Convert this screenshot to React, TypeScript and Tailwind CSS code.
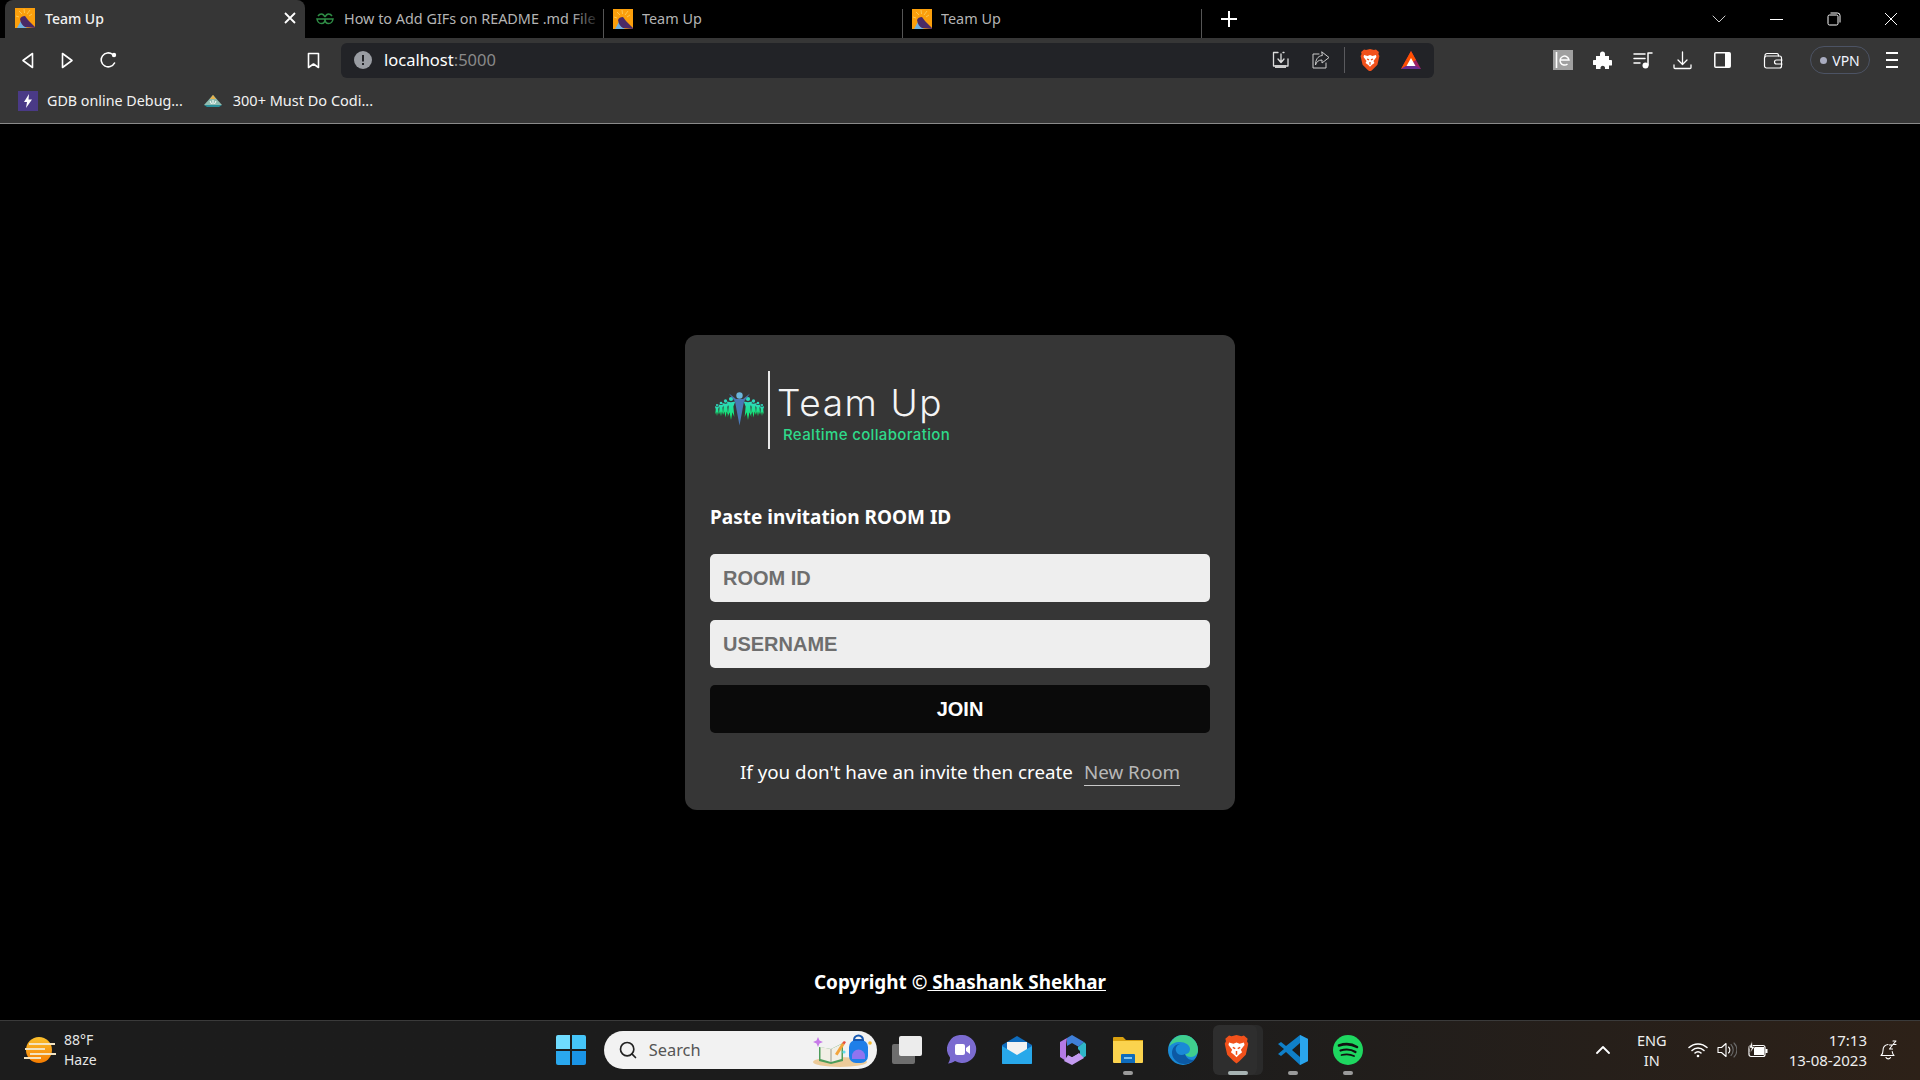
import { Search } from 'lucide-react';

const sans = 'font-["Noto_Sans",sans-serif]';

function Favicon() {
  return (
    <svg width="20" height="20" viewBox="0 0 20 20" className="shrink-0">
      <rect width="20" height="20" fill="#fb9f0c" />
      <path d="M9 1l.5 4M4 3l3 3M15 2l-3 4M1 8l3 1M17 6l-3 2" stroke="#fdc850" strokeWidth="1" />
      <path d="M2 20l5-9 1 6 4 3z" fill="#6fb0e0" />
      <path d="M5 11q1-3 5-3l3 4 7 7v1l-10-1q-4-2-5-8z" fill="#4a2a66" />
    </svg>
  );
}

function Tab({ active, title, icon, fade }: { active?: boolean; title: string; icon?: React.ReactNode; fade?: boolean }) {
  return (
    <div
      className={
        active
          ? 'flex h-[38px] w-[300px] items-center rounded-t-[8px] bg-[#363636] pb-[2px] pl-[10px] pr-[9px]'
          : 'relative flex h-[38px] w-[298px] items-center pb-[1px] pl-[9px]'
      }
    >
      {icon ?? <Favicon />}
      <span
        className={
          active
            ? 'ml-[10px] flex-1 text-[14px] font-medium text-[#f2f2f2]'
            : 'ml-[9px] w-[252px] overflow-hidden whitespace-nowrap text-[14.4px] text-[#b4b4b4]'
        }
      >
        {title}
      </span>
      {fade && <div className="absolute right-[12px] top-0 h-[38px] w-[30px] bg-gradient-to-r from-transparent to-black" />}
      {active && (
        <svg width="12" height="12" viewBox="0 0 12 12" stroke="#fff" strokeWidth="1.8">
          <path d="M1 1l10 10M11 1L1 11" />
        </svg>
      )}
    </div>
  );
}

function Divider() {
  return <div className="relative mt-[9px] h-[29px] w-px bg-[#555]" />;
}

function Stroke({ w = 20, h = 20, children, sw = 1.6, color = '#fff' }: { w?: number; h?: number; children: React.ReactNode; sw?: number; color?: string }) {
  return (
    <svg width={w} height={h} viewBox={`0 0 ${w} ${h}`} fill="none" stroke={color} strokeWidth={sw} strokeLinejoin="round" strokeLinecap="round" className="shrink-0">
      {children}
    </svg>
  );
}

function BraveIcon({ size = 20 }: { size?: number }) {
  return (
    <svg width={size} height={size * 1.14} viewBox="0 0 20 23" className="shrink-0">
      <path d="M10 0l4 1 2-.5L19 3l-.5 2 1 2-2 9-5 5-2.5 2-2.5-2-5-5-2-9 1-2L1 3l3-2.5L6 1z" fill="#f1511b" />
      <path d="M4 6l3.5 1L10 6l2.5 1L16 6l.5 2-3 4 1 2-2.5 2-2 2-2-2-2.5-2 1-2-3-4z" fill="#fff" />
      <path d="M7 10l2 1M13 10l-2 1M10 13v3" stroke="#f1511b" strokeWidth="1.2" />
    </svg>
  );
}

function BrowserChrome() {
  return (
    <div className="shrink-0">
      <div className="flex h-[38px] items-start bg-black pl-[5px]">
        <Tab active title="Team Up" />
        <div className="ml-[11px] w-[287px]">
          <Tab
            fade
            title="How to Add GIFs on README .md File"
            icon={
              <svg width="18" height="12" viewBox="0 0 18 12" fill="none" stroke="#2f8d46" strokeWidth="1.5" className="ml-[-9px] mr-[1px] shrink-0">
                <path d="M9 6h8c-.5 3-2.5 4.500-4.500 4.500S9 9 9 6zM9 6H1c.5 3 2.500 4.500 4.500 4.500S9 9 9 6zM2 3c1-1.500 2-2 3.500-2S8 2 9 4M16 3c-1-1.500-2-2-3.500-2S10 2 9 4" />
              </svg>
            }
          />
        </div>
        <Divider />
        <Tab title="Team Up" />
        <Divider />
        <Tab title="Team Up" />
        <Divider />
        <div className="ml-[19px] mt-[11px]">
          <Stroke w={16} h={16} sw={2}>
            <path d="M8 0v16M0 8h16" />
          </Stroke>
        </div>
        <div className="ml-auto flex h-[38px] items-center">
          <Stroke w={14} h={8} sw={1} color="#ccc">
            <path d="M1 1l6 6 6-6" />
          </Stroke>
          <div className="ml-[44px] h-px w-[13px] bg-white" />
          <svg width="14" height="14" viewBox="0 0 14 14" fill="none" stroke="#fff" strokeWidth="1" className="ml-[44px]">
            <rect x="1" y="3" width="10" height="10" rx="1.5" />
            <path d="M3.5 1h7A2.500 2.500 0 0 1 13 3.500v7" />
          </svg>
          <svg width="14" height="14" viewBox="0 0 14 14" stroke="#fff" strokeWidth="1" className="ml-[43px] mr-[22px]">
            <path d="M1 1l12 12M13 1L1 13" />
          </svg>
        </div>
      </div>

      <div className="h-[86px] border-b border-[#8a8a8a] bg-[#363636]">
        <div className="flex h-[46px] items-center pb-[2px]">
          <div className="ml-[21px]">
            <Stroke w={13} h={17}><path d="M11.5 1.500v14L2 8.500z" /></Stroke>
          </div>
          <div className="ml-[27px]">
            <Stroke w={13} h={17}><path d="M1.5 1.500v14l9.500-7z" /></Stroke>
          </div>
          <div className="ml-[26px]">
            <Stroke w={17} h={18}>
              <path d="M14.5 12a7 7 0 1 1-1.800-8.500" />
              <circle cx="14" cy="4" r="2.2" fill="#fff" stroke="none" />
            </Stroke>
          </div>
          <div className="ml-[190px]">
            <Stroke w={13} h={17}><path d="M1.5 1.500h10v14L6.500 12l-5 3.500z" /></Stroke>
          </div>
          <div className="ml-[21px] flex h-[35px] w-[1093px] items-center rounded-[6px] bg-[#222327]">
            <svg width="18" height="18" viewBox="0 0 18 18" className="ml-[13px]">
              <circle cx="9" cy="9" r="9" fill="#9a9da3" />
              <rect x="8" y="4" width="2" height="6.5" fill="#222327" />
              <rect x="8" y="12" width="2" height="2" fill="#222327" />
            </svg>
            <span className={`ml-[12px] text-[16.5px] text-white ${sans}`}>
              localhost<span className="text-[#8a8a8a]">:5000</span>
            </span>
            <div className="ml-auto">
              <Stroke w={20} h={20} sw={1.3} color="#ddd">
                <path d="M5 16H2.500V2.500H7M12 2.500h1M17 9v7h-2M10 4v8M7 9l3 3.500 3-3.500" />
                <rect x="4" y="15" width="11" height="3" fill="#ccc" stroke="none" />
              </Stroke>
            </div>
            <div className="ml-[20px]">
              <Stroke w={20} h={20} sw={1} color="#ccc">
                <path d="M8 4H2v14h13v-5M11 2l7 5.500-7 5.500V10C7 10 5.500 12 4.500 15c0-5 2-9 6.500-9.500z" />
              </Stroke>
            </div>
            <div className="ml-[13px] h-[26px] w-px bg-[#5a5a5e]" />
            <div className="ml-[15px]"><BraveIcon /></div>
            <svg width="20" height="18" viewBox="0 0 20 18" className="ml-[21px] mr-[13px]">
              <path d="M10 0l10 18H0z" fill="#9e1f63" />
              <path d="M10 0l5 9-5 3-5-3z" fill="#ff5000" />
              <path d="M0 18l5-9 5 3z" fill="#ff5000" />
              <path d="M10 7l4.500 8h-9z" fill="#fff" />
              <path d="M20 18H0l5-3h10z" fill="#662d91" />
            </svg>
          </div>

          <svg width="20" height="20" viewBox="0 0 20 20" className="ml-[119px]" fill="none">
            <rect width="20" height="20" fill="#a0a0a0" />
            <path d="M3.5 2v16" stroke="#fff" strokeWidth="1.6" />
            <path d="M7 10h9a4.500 4.500 0 1 0-1.500 4" stroke="#fff" strokeWidth="1.5" />
          </svg>
          <svg width="19" height="18" viewBox="0 0 19 18" className="ml-[20px]" fill="#fff">
            <path d="M3 5h4V3a2.500 2.500 0 0 1 5 0v2h4v4h2a2.800 2.800 0 0 1 0 5.500h-2V18h-4v-1.500a2.300 2.300 0 0 0-4.500 0V18H3v-4H1.500a2.500 2.500 0 0 1 0-5H3z" />
          </svg>
          <div className="ml-[21px]">
            <Stroke w={20} h={17} sw={1.5}>
              <path d="M1 2h11M1 6.500h11M1 11h6M19 1h-4v12" />
              <circle cx="12.5" cy="13.5" r="3" fill="#fff" stroke="none" />
            </Stroke>
          </div>
          <div className="ml-[20px]">
            <Stroke w={19} h={19} sw={1.3}>
              <path d="M9.5 1v12M5 9l4.500 4.500L14 9M1 14v2.500a1 1 0 0 0 1 1h15a1 1 0 0 0 1-1V14" />
            </Stroke>
          </div>
          <svg width="17" height="16" viewBox="0 0 17 16" className="ml-[22px]" fill="none">
            <rect x=".8" y=".8" width="15.4" height="14.4" rx="1" stroke="#fff" strokeWidth="1.5" />
            <rect x="11" y="1" width="5" height="14" fill="#fff" />
          </svg>
          <div className="ml-[32px]">
            <Stroke w={20} h={17} sw={1.2}>
              <path d="M2 5V3.500A2 2 0 0 1 4 1.500h10c1 0 1.500 1 1.500 2.500" />
              <rect x="1.5" y="4" width="17" height="12" rx="2" />
              <path d="M19 8h-5.500a2 2 0 0 0 0 4H19" />
            </Stroke>
          </div>
          <div className="ml-[27px] flex h-[28px] w-[60px] items-center justify-center gap-[5px] rounded-full border border-[#4c5364]">
            <span className="h-[7px] w-[7px] rounded-full bg-[#a9acc0]" />
            <span className={`text-[14px] text-[#f0f4ff] ${sans}`}>VPN</span>
          </div>
          <div className="ml-[16px] flex w-[12px] flex-col gap-[5px]">
            <div className="h-[2px] bg-white" />
            <div className="h-[2px] bg-white" />
            <div className="h-[2px] bg-white" />
          </div>
        </div>

        <div className={`flex h-[38px] items-center pb-[4px] text-[14.3px] text-[#f2f2f2] ${sans}`}>
          <div className="ml-[18px] flex h-[20px] w-[20px] items-center justify-center bg-[#4a3a86]">
            <svg width="8" height="14" viewBox="0 0 8 14" fill="#fff">
              <path d="M5 0L0 8h3l-1 6 6-8.500H4.500z" />
            </svg>
          </div>
          <span className="ml-[9px]">GDB online Debug...</span>
          <svg width="20" height="12" viewBox="0 0 20 12" className="ml-[20px]">
            <path d="M10 0l9 10H1z" fill="#8fbcb0" />
            <path d="M10 0l3 4H7z" fill="#e8b24a" />
            <path d="M1 10h18l-3 2H4z" fill="#2a8f9a" />
            <path d="M7 6l1.500 3M13 6l-1.500 3M10 5v4" stroke="#fff" strokeWidth="1" />
          </svg>
          <span className="ml-[10px] text-[14.5px]">300+ Must Do Codi...</span>
        </div>
      </div>
    </div>
  );
}

function TeamLogo() {
  const figures = [
    { x: 2, y: 13, s: 0.5 },
    { x: 6, y: 11, s: 0.6 },
    { x: 10.5, y: 9, s: 0.75 },
    { x: 16, y: 7, s: 0.95 },
    { x: 33, y: 7, s: 0.95 },
    { x: 38.5, y: 9, s: 0.75 },
    { x: 43, y: 11, s: 0.6 },
    { x: 47, y: 13, s: 0.5 },
  ];
  return (
    <svg width="49" height="34" viewBox="0 0 49 34" className="ml-[5px] mb-[2px] shrink-0">
      <defs>
        <linearGradient id="fig" x1="0" y1="0" x2="0" y2="1">
          <stop offset="0" stopColor="#2fd9c0" />
          <stop offset="1" stopColor="#08ee5c" />
        </linearGradient>
      </defs>
      {figures.map((f, i) => (
        <g key={i} transform={`translate(${f.x} ${f.y}) scale(${f.s})`}>
          <circle cx="0" cy="0" r="2.2" fill="#2fd9c0" />
          <path d="M-4.500 2.500L0 3.500 4.500 2.500 2.500 8 3.500 19 1.500 14 0 22-1.500 14-3.500 19-2.500 8z" fill="url(#fig)" />
        </g>
      ))}
      <circle cx="24.5" cy="3.5" r="3.2" fill="#6cb6dc" />
      <path d="M14 1.500l7 5.500h7l7-5.500-6 8-3 16-1.500 8-1.500-8-3-16z" fill="#4a78b5" />
    </svg>
  );
}

function JoinCard() {
  return (
    <div className="flex h-[475px] w-[550px] flex-col rounded-[12px] bg-[#363636] px-[25px]">
      <div className="mt-[36px] flex h-[78px] items-center">
        <TeamLogo />
        <div className="ml-[4px] h-[78px] w-[2px] bg-[#e8e8e8]" />
        <div className="ml-[7px] flex h-[78px] flex-col">
          <span className="mt-[9px] whitespace-nowrap font-['Inter',sans-serif] text-[37px] font-light leading-[46px] tracking-[1.6px] text-[#f4f4f4]">
            Team Up
          </span>
          <span className="ml-[6px] whitespace-nowrap font-['Inter',sans-serif] text-[15px] font-medium leading-[18px] tracking-[0.35px] text-[#2fd98a]">
            Realtime collaboration
          </span>
        </div>
      </div>
      <h4 className={`mt-[55px] whitespace-nowrap text-[19px] font-bold leading-[27px] text-white ${sans}`}>Paste invitation ROOM ID</h4>
      <div className="mt-[23px] flex flex-col">
        <input
          placeholder="ROOM ID"
          className="h-[48px] w-full rounded-[5px] bg-[#eeeeee] px-[13px] font-['Liberation_Sans',sans-serif] text-[20px] font-bold text-black outline-none placeholder:text-[#6e6e6e]"
        />
        <input
          placeholder="USERNAME"
          className="mt-[18px] h-[48px] w-full rounded-[5px] bg-[#eeeeee] px-[13px] font-['Liberation_Sans',sans-serif] text-[20px] font-bold text-black outline-none placeholder:text-[#6e6e6e]"
        />
        <button className="mt-[17px] h-[48px] w-full rounded-[5px] bg-[#0a0a0a] font-['Liberation_Sans',sans-serif] text-[20px] font-bold text-white">
          JOIN
        </button>
      </div>
      <p className={`mt-[26px] text-center text-[18.8px] leading-[27px] text-white ${sans}`}>
        If you don't have an invite then create
        <a className="ml-[11px] border-b border-[#c8c8c8] text-[#b8b8b8]">New Room</a>
      </p>
    </div>
  );
}

function TaskbarIcons() {
  return (
    <div className="flex items-center">
      {/* task view */}
      <div className="relative ml-[15px] h-[28px] w-[30px]">
        <div className="absolute bottom-0 left-0 h-[20px] w-[23px] rounded-[2px] bg-[#6e6e6e]" />
        <div className="absolute right-0 top-0 h-[20px] w-[23px] rounded-[2px] bg-[#ececec]" />
      </div>
      {/* chat */}
      <svg width="30" height="29" viewBox="0 0 30 29" className="ml-[25px]">
        <path d="M15 0a14 14 0 1 1-7 26c-2 1.500-5 2.500-7 2.500 1.500-2 2-4 2-6A14 14 0 0 1 15 0z" fill="#7b6bd0" />
        <rect x="8" y="9" width="10" height="11" rx="2" fill="#fff" />
        <path d="M19 13l4-3v9l-4-3z" fill="#fff" />
      </svg>
      {/* mail */}
      <svg width="30" height="28" viewBox="0 0 30 28" className="ml-[25px]">
        <path d="M0 9L15 0l15 9v18a1 1 0 0 1-1 1H1a1 1 0 0 1-1-1z" fill="#0f6cbd" />
        <path d="M5 6h20v9l-10 6-10-6z" fill="#f2f2f2" />
        <path d="M0 10l15 9 15-9v17a1 1 0 0 1-1 1H1a1 1 0 0 1-1-1z" fill="#28a8ea" />
      </svg>
      {/* microsoft 365 */}
      <svg width="28" height="30" viewBox="0 0 28 30" className="ml-[26px]">
        <path d="M14 0l12 7-6 5-6-3-5 3V3z" fill="#3f7fd8" />
        <path d="M9 3L2 7v15l6 4V10z" fill="#b479e6" />
        <path d="M26 7l2 2v12l-6 4v-9l-3-3z" fill="#2fb6c9" />
        <path d="M6 26l8 4 12-7-5-5-7 4-4-2z" fill="#c39af0" />
        <path d="M9 11l5-3 6 3.500v7L14 22l-5-3z" fill="#1c1c1c" />
      </svg>
      {/* file explorer */}
      <svg width="30" height="27" viewBox="0 0 30 27" className="relative ml-[27px]">
        <path d="M0 2a1 1 0 0 1 1-1h9l3 3h17v5H0z" fill="#d9a00f" />
        <path d="M0 5h30v21a1 1 0 0 1-1 1H1a1 1 0 0 1-1-1z" fill="#fbd34e" />
        <path d="M8 19a1 1 0 0 1 1-1h12a1 1 0 0 1 1 1v8H8z" fill="#0f6cbd" />
        <rect x="11" y="21" width="8" height="2" fill="#7fc4f0" />
      </svg>
      {/* edge */}
      <svg width="30" height="30" viewBox="0 0 30 30" className="ml-[25px]">
        <circle cx="15" cy="15" r="15" fill="#1a8ad6" />
        <path d="M1 12C3 4 9 0 15 0c8 0 15 6 15 15 0 4-3 7-7 7-3 0-5-1-6-3 3 0 5-2 5-5 0-4-5-7-10-7C7 7 3 9 1 12z" fill="#3fcf8e" />
        <path d="M17 19c-3 2-8 1-9-3-1-3 1-6 4-7-5 0-8 4-8 9 0 6 6 11 12 11 4 0 9-2 11-5-3 2-8 1-10-5z" fill="#0c59a4" />
      </svg>
      {/* brave */}
      <div className="relative ml-[15px] h-[50px] w-[50px]">
        <div className="absolute right-0 top-0 h-[50px] w-[20px] rounded-[6px] bg-[#2a2a2a]" />
        <div className="absolute left-0 top-0 flex h-[50px] w-[44px] items-center justify-center rounded-[6px] bg-[#2e2e2e] pl-[4px]">
          <BraveIcon size={25} />
        </div>
      </div>
      {/* vs code */}
      <svg width="30" height="30" viewBox="0 0 30 30" className="ml-[15px]">
        <path d="M22 0l8 4v22l-8 4-14-13-5 4-3-2 6-5-6-5 3-2 5 4z" fill="#0f7fc8" />
        <path d="M22 0l8 4v22l-8 4z" fill="#2aa5ec" />
        <path d="M22 8l-8 7 8 7z" fill="#1c1c1c" />
      </svg>
      {/* spotify */}
      <svg width="30" height="30" viewBox="0 0 30 30" className="ml-[25px]" fill="none">
        <circle cx="15" cy="15" r="15" fill="#1ed760" />
        <path d="M6 10.500c6-2 13-1.500 18 1.500" stroke="#111" strokeWidth="2.6" strokeLinecap="round" />
        <path d="M7.500 15.500c5-1.500 11-1 15 1.500" stroke="#111" strokeWidth="2.2" strokeLinecap="round" />
        <path d="M8.500 20c4-1 9-.8 12.500 1" stroke="#111" strokeWidth="1.8" strokeLinecap="round" />
      </svg>
    </div>
  );
}

function Taskbar() {
  return (
    <div className={`relative flex h-[60px] shrink-0 items-center border-t border-[#3a3a3a] bg-gradient-to-r from-[#1c1c1c] from-60% to-[#2d2118] pb-[2px] text-white ${sans}`}>
      {/* weather */}
      <svg width="32" height="26" viewBox="0 0 32 26" className="ml-[24px]">
        <defs>
          <linearGradient id="sun" x1="0" y1="0" x2="0" y2="1">
            <stop offset="0" stopColor="#fbc02d" />
            <stop offset="1" stopColor="#f57c00" />
          </linearGradient>
        </defs>
        <circle cx="15" cy="13" r="13" fill="url(#sun)" />
        <path d="M5 7h26M1 12h20M6 17h26M0 21h17" stroke="#f3e3c0" strokeWidth="2.2" />
      </svg>
      <div className="ml-[8px] text-[14px] leading-[20px] text-[#e6e6e6]">
        <div>88°F</div>
        <div>Haze</div>
      </div>

      {/* windows */}
      <div className="ml-[459px] grid h-[30px] w-[30px] grid-cols-2 gap-[2px]">
        <div className="rounded-tl-[2px] bg-[#6fdcff]" />
        <div className="rounded-tr-[2px] bg-[#45c5f8]" />
        <div className="rounded-bl-[2px] bg-[#2aa8ee]" />
        <div className="rounded-br-[2px] bg-[#1a94e6]" />
      </div>

      <div className="relative ml-[18px] flex h-[38px] w-[273px] items-center rounded-full bg-[#f2f2f2]">
        <Search size={20} strokeWidth={2} color="#222" className="ml-[14px]" />
        <span className="ml-[11px] pt-[2px] text-[16.4px] text-[#555]">Search</span>
        <svg width="62" height="38" viewBox="0 0 62 38" className="absolute right-[2px] top-0">
          <ellipse cx="27" cy="31" rx="27" ry="5" fill="#eccb9a" />
          <path d="M6 16l12 2 12-6v18l-12 3-12-3z" fill="#4d9c5a" />
          <path d="M7.500 16l10.500 2 10.500-5v15l-10.500 3-10.500-3z" fill="#f1efe6" />
          <path d="M18 18v13" stroke="#9a9a8a" strokeWidth="1" />
          <path d="M22 23l7-11 2.500 1.500-7 11z" fill="#f3a53c" />
          <path d="M29 12l2-2 2 1-1.500 2.500z" fill="#e8503c" />
          <path d="M2 6l1.500 3.500L7 11l-3.500 1.500L2 16l-1.500-3.500L-3 11l3.500-1.500z" transform="translate(3 0)" fill="#c77be8" />
          <circle cx="31" cy="21" r="1.6" fill="#63dcec" />
          <rect x="36" y="9" width="19" height="23" rx="7" fill="#1f7fe8" />
          <path d="M41 9a4.500 4.500 0 0 1 9 0z" fill="none" stroke="#1557b0" strokeWidth="2" />
          <path d="M39 25a6.500 6.500 0 0 1 13 0v3H39z" fill="#8f74f0" />
          <circle cx="57" cy="12" r="1.8" fill="#f3b92c" />
        </svg>
      </div>

      <TaskbarIcons />

      {/* running indicators */}
      <div className="absolute bottom-[5px] left-[1123px] h-[4px] w-[10px] rounded-full bg-[#9a9a9a]" />
      <div className="absolute bottom-[5px] left-[1228px] h-[4px] w-[20px] rounded-full bg-[#a8b4b4]" />
      <div className="absolute bottom-[5px] left-[1288px] h-[4px] w-[10px] rounded-full bg-[#9a9a9a]" />
      <div className="absolute bottom-[5px] left-[1343px] h-[4px] w-[10px] rounded-full bg-[#9a9a9a]" />

      {/* tray */}
      <div className="ml-[233px]">
        <Stroke w={14} h={9} sw={1.8}><path d="M1 8l6-6 6 6" /></Stroke>
      </div>
      <div className="ml-[27px] w-[30px] text-center text-[14.5px] leading-[20px] text-[#eee]">
        <div>ENG</div>
        <div>IN</div>
      </div>
      <div className="ml-[21px]">
        <Stroke w={20} h={16} sw={1.5}>
          <path d="M1 5.500a13 13 0 0 1 18 0M4 8.500a8.500 8.500 0 0 1 12 0M7 11a4 4 0 0 1 6 0" />
          <circle cx="10" cy="14" r="1.3" fill="#fff" stroke="none" />
        </Stroke>
      </div>
      <div className="ml-[9px]">
        <Stroke w={20} h={16} sw={1.1}>
          <path d="M1 5.500h3.500L9 1.500v13l-4.500-4H1z" />
          <path d="M11.5 5a4 4 0 0 1 0 6" />
          <path d="M14 2.500a8 8 0 0 1 0 11M17 1a10 10 0 0 1 0 14" stroke="#6a6a6a" />
        </Stroke>
      </div>
      <svg width="20" height="17" viewBox="0 0 20 17" className="ml-[11px]" fill="none">
        <rect x="1" y="4.500" width="16" height="11" rx="2" stroke="#fff" strokeWidth="1.2" />
        <rect x="6" y="6" width="10" height="8" fill="#fff" />
        <rect x="17.5" y="8" width="2" height="4" fill="#fff" />
        <path d="M4 0L1 7h2.500L2 12l5-6.500H4.500z" fill="#fff" stroke="#2d2118" strokeWidth=".6" />
      </svg>
      <div className="ml-auto text-right text-[15px] leading-[20px] text-[#eee]">
        <div>17:13</div>
        <div>13-08-2023</div>
      </div>
      <div className="ml-[13px] mr-[23px]">
        <Stroke w={17} h={20} sw={1.1}>
          <path d="M1 15.500c1.500-1 2-2 2-5 0-3 1.500-5.500 5-6M1 15.500h13c-1-.8-1.500-2-1.800-4M6 17.500a2.500 2.500 0 0 0 4.500 0" />
          <path d="M9.500 5h3l-3 4h3M13 1h3l-3 3.500h3" />
        </Stroke>
      </div>
    </div>
  );
}

export default function App() {
  return (
    <div className="flex h-screen w-full flex-col overflow-hidden bg-black font-['Noto_Sans',sans-serif]">
      <BrowserChrome />
      <main className="flex flex-1 flex-col items-center pt-[211px]">
        <JoinCard />
        <p className={`mt-[159px] text-[18.9px] font-bold leading-[27px] text-white ${sans}`}>
          Copyright ©<a className="underline"> Shashank Shekhar</a>
        </p>
      </main>
      <Taskbar />
    </div>
  );
}
